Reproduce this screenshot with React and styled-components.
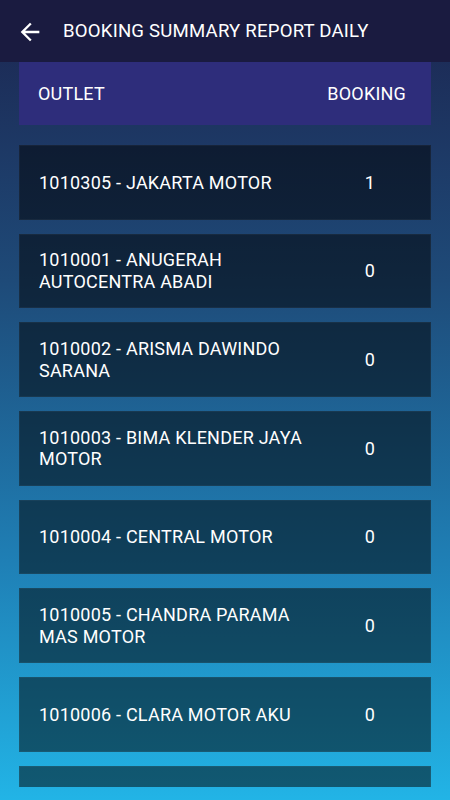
import React from 'react';
import styled, { createGlobalStyle } from 'styled-components';

const GlobalStyle = createGlobalStyle`
  html, body {
    margin: 0;
    padding: 0;
  }
  body {
    font-family: Roboto, "Liberation Sans", sans-serif;
    background: #1a1b40;
  }
`;

const Screen = styled.div`
  width: 450px;
  height: 800px;
  display: flex;
  flex-direction: column;
  overflow: hidden;
  background: linear-gradient(180deg, #1c2550 0%, #1e4a78 35%, #1f7fb5 70%, #22b4e6 100%);
`;

const AppBar = styled.div`
  height: 62px;
  flex-shrink: 0;
  display: flex;
  align-items: center;
  padding-left: 16px;
  background: #1a1b40;
  color: #fff;
`;

const BackButton = styled.button`
  width: 28px;
  height: 28px;
  padding: 0;
  border: none;
  background: none;
  display: flex;
  cursor: pointer;
  margin-right: 19px;
  margin-top: 2px;
`;

const Title = styled.h1`
  margin: 0;
  font-size: 18.6px;
  font-weight: 400;
  letter-spacing: 0.2px;
`;

const Body = styled.div`
  flex: 1;
  display: flex;
  flex-direction: column;
  padding: 0 19px 13px;
  min-height: 0;
`;

const HeaderCard = styled.div`
  height: 63px;
  flex-shrink: 0;
  display: flex;
  align-items: center;
  justify-content: space-between;
  padding: 0 25px 0 19px;
  background: #2e2d7b;
  color: #fff;
  font-size: 18px;
  letter-spacing: 0.2px;
`;

const List = styled.div`
  flex: 1;
  min-height: 0;
  overflow: hidden;
  display: flex;
  flex-direction: column;
  gap: 14px;
  padding-top: 20px;
`;

const Row = styled.div`
  height: 74.67px;
  flex-shrink: 0;
  box-sizing: border-box;
  display: flex;
  align-items: center;
  padding: 0 10px 0 19px;
  background: rgba(0, 0, 0, 0.5);
  border: 1px solid rgba(255, 255, 255, 0.04);
  color: #fff;
  font-size: 18px;
  letter-spacing: 0.22px;
`;

const Outlet = styled.div`
  flex: 1;
  line-height: 21.5px;
`;

const Count = styled.div`
  width: 100px;
  text-align: center;
`;

const rows = [
  ['1010305 - JAKARTA MOTOR', 1],
  ['1010001 - ANUGERAH AUTOCENTRA ABADI', 0],
  ['1010002 - ARISMA DAWINDO SARANA', 0],
  ['1010003 - BIMA KLENDER JAYA MOTOR', 0],
  ['1010004 - CENTRAL MOTOR', 0],
  ['1010005 - CHANDRA PARAMA MAS MOTOR', 0],
  ['1010006 - CLARA MOTOR AKU', 0],
  ['1010007 - DAYA MOTOR', 0],
];

export default function App() {
  return (
    <>
      <GlobalStyle />
      <Screen>
        <AppBar>
          <BackButton aria-label="Back">
            <svg width="28" height="28" viewBox="0 0 24 24" fill="#fff">
              <path d="M20 11H7.83l5.59-5.59L12 4l-8 8 8 8 1.41-1.41L7.83 13H20v-2z" />
            </svg>
          </BackButton>
          <Title>BOOKING SUMMARY REPORT DAILY</Title>
        </AppBar>
        <Body>
          <HeaderCard>
            <span>OUTLET</span>
            <span>BOOKING</span>
          </HeaderCard>
          <List>
            {rows.map(([name, count]) => (
              <Row key={name}>
                <Outlet>{name}</Outlet>
                <Count>{count}</Count>
              </Row>
            ))}
          </List>
        </Body>
      </Screen>
    </>
  );
}
